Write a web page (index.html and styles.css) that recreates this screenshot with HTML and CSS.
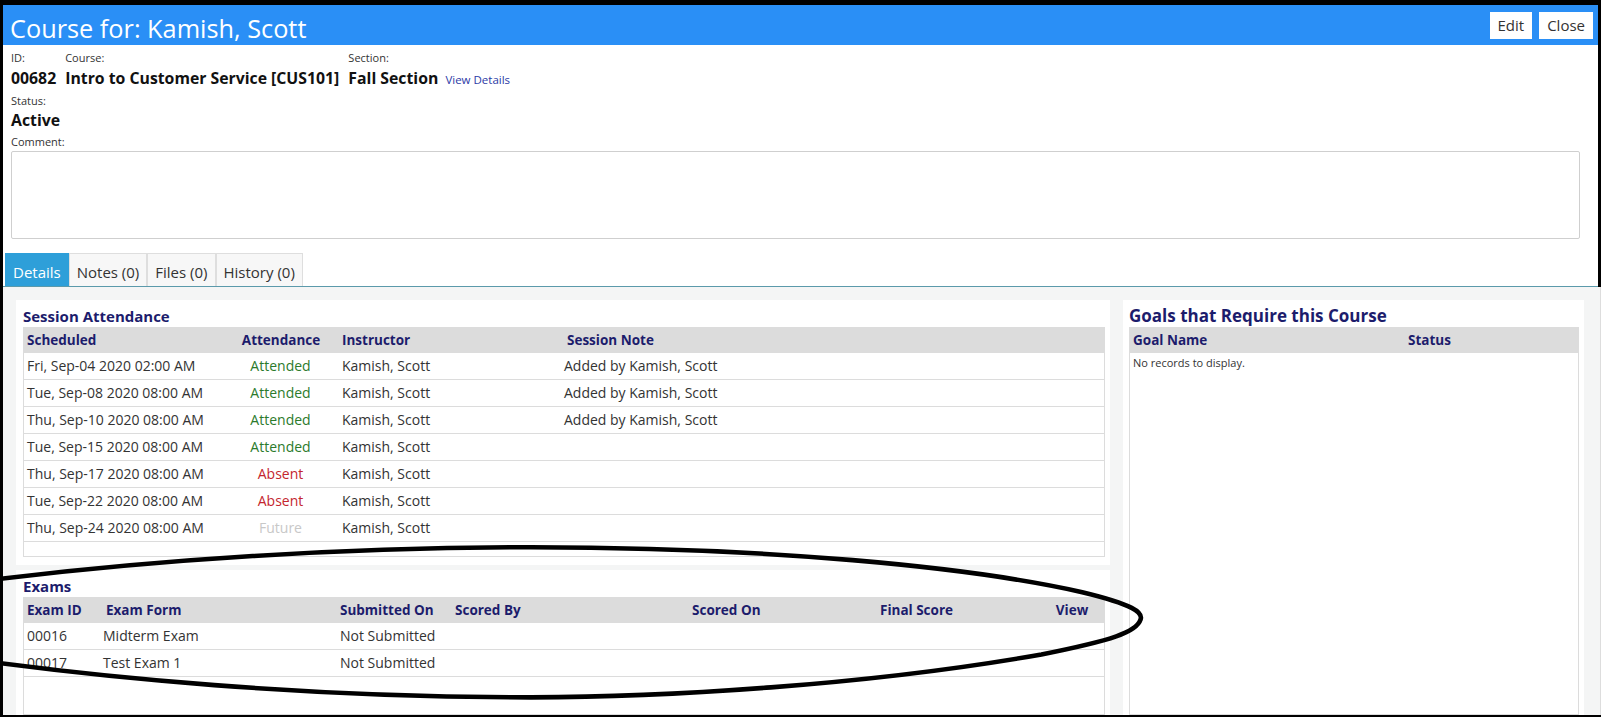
FILE: index.html
```html
<!DOCTYPE html>
<html lang="en">
<head>
    <meta charset="UTF-8">
    <meta name="viewport" content="width=device-width, initial-scale=1.0">
    <title>Course for: Kamish, Scott</title>
    <link rel="stylesheet" href="styles.css">
</head>
<body>
    <div class="window">
        <div class="top">
            <div class="titlebar">
                <h1>Course for: Kamish, Scott</h1>
                <div class="actions">
                    <button class="btn">Edit</button>
                    <button class="btn">Close</button>
                </div>
            </div>

            <div class="info">
                <div class="fields">
                    <div class="field">
                        <div class="label">ID:</div>
                        <div class="value">00682</div>
                    </div>
                    <div class="field">
                        <div class="label">Course:</div>
                        <div class="value">Intro to Customer Service [CUS101]</div>
                    </div>
                    <div class="field">
                        <div class="label">Section:</div>
                        <div class="value">Fall Section <a href="#" class="link">View Details</a></div>
                    </div>
                </div>
                <div class="field status">
                    <div class="label">Status:</div>
                    <div class="value">Active</div>
                </div>
                <div class="field comment">
                    <div class="label">Comment:</div>
                    <div class="comment-box"></div>
                </div>
            </div>

            <div class="tabs">
                <div class="tab active">Details</div>
                <div class="tab">Notes (0)</div>
                <div class="tab">Files (0)</div>
                <div class="tab">History (0)</div>
            </div>
        </div>

        <div class="content">
            <div class="left">
                <div class="panel">
                    <div class="panel-title">Session Attendance</div>
                    <div class="grid">
                        <table>
                            <colgroup>
                                <col class="c-sched">
                                <col class="c-att">
                                <col class="c-inst">
                                <col>
                            </colgroup>
                            <thead>
                                <tr>
                                    <th>Scheduled</th>
                                    <th class="center">Attendance</th>
                                    <th>Instructor</th>
                                    <th class="shift">Session Note</th>
                                </tr>
                            </thead>
                            <tbody>
                                <tr>
                                    <td>Fri, Sep-04 2020 02:00 AM</td>
                                    <td class="center attended">Attended</td>
                                    <td>Kamish, Scott</td>
                                    <td>Added by Kamish, Scott</td>
                                </tr>
                                <tr>
                                    <td>Tue, Sep-08 2020 08:00 AM</td>
                                    <td class="center attended">Attended</td>
                                    <td>Kamish, Scott</td>
                                    <td>Added by Kamish, Scott</td>
                                </tr>
                                <tr>
                                    <td>Thu, Sep-10 2020 08:00 AM</td>
                                    <td class="center attended">Attended</td>
                                    <td>Kamish, Scott</td>
                                    <td>Added by Kamish, Scott</td>
                                </tr>
                                <tr>
                                    <td>Tue, Sep-15 2020 08:00 AM</td>
                                    <td class="center attended">Attended</td>
                                    <td>Kamish, Scott</td>
                                    <td></td>
                                </tr>
                                <tr>
                                    <td>Thu, Sep-17 2020 08:00 AM</td>
                                    <td class="center absent">Absent</td>
                                    <td>Kamish, Scott</td>
                                    <td></td>
                                </tr>
                                <tr>
                                    <td>Tue, Sep-22 2020 08:00 AM</td>
                                    <td class="center absent">Absent</td>
                                    <td>Kamish, Scott</td>
                                    <td></td>
                                </tr>
                                <tr>
                                    <td>Thu, Sep-24 2020 08:00 AM</td>
                                    <td class="center future">Future</td>
                                    <td>Kamish, Scott</td>
                                    <td></td>
                                </tr>
                            </tbody>
                        </table>
                    </div>
                </div>

                <div class="panel grow">
                    <div class="panel-title">Exams</div>
                    <div class="grid fill">
                        <table>
                            <colgroup>
                                <col class="c-eid">
                                <col class="c-form">
                                <col class="c-sub">
                                <col class="c-by">
                                <col class="c-on">
                                <col class="c-score">
                                <col>
                            </colgroup>
                            <thead>
                                <tr>
                                    <th>Exam ID</th>
                                    <th class="shift">Exam Form</th>
                                    <th>Submitted On</th>
                                    <th>Scored By</th>
                                    <th>Scored On</th>
                                    <th>Final Score</th>
                                    <th class="center">View</th>
                                </tr>
                            </thead>
                            <tbody>
                                <tr>
                                    <td>00016</td>
                                    <td>Midterm Exam</td>
                                    <td>Not Submitted</td>
                                    <td></td>
                                    <td></td>
                                    <td></td>
                                    <td></td>
                                </tr>
                                <tr>
                                    <td>00017</td>
                                    <td>Test Exam 1</td>
                                    <td>Not Submitted</td>
                                    <td></td>
                                    <td></td>
                                    <td></td>
                                    <td></td>
                                </tr>
                            </tbody>
                        </table>
                    </div>
                </div>
            </div>

            <div class="panel side">
                <div class="panel-title">Goals that Require this Course</div>
                <div class="grid fill">
                    <table>
                        <colgroup>
                            <col class="c-goal">
                            <col>
                        </colgroup>
                        <thead>
                            <tr>
                                <th>Goal Name</th>
                                <th>Status</th>
                            </tr>
                        </thead>
                    </table>
                    <div class="empty">No records to display.</div>
                </div>
            </div>
        </div>

        <!-- hand drawn mark around the exams -->
        <svg class="annotation" viewBox="0 0 1601 717">
            <g transform="scale(1.021)">
                <path d="M -40 572 C 150 547, 350 536, 520 536 C 750 536, 950 555, 1060 580 C 1110 592, 1120 600, 1117 607 C 1113 619, 1090 627, 1020 641 C 850 671, 650 683, 520 683 C 300 683, 100 664, -40 644"
                      fill="none" stroke="#000" stroke-width="4.5" stroke-linecap="round"/>
            </g>
        </svg>
    </div>
</body>
</html>
```

FILE: styles.css
```css
html, body {
    margin: 0;
    height: 100%;
    overflow: hidden;
}
body {
    font-family: "Open Sans", "Noto Sans", Arial, sans-serif;
    color: #333;
    background: #fff;
}
.window {
    position: relative;
    height: 717px;
    box-sizing: border-box;
    border-top: 5px solid #000;
    border-left: 3px solid #000;
    border-bottom: 2px solid #000;
    display: flex;
    flex-direction: column;
    overflow: hidden;
}
.top {
    border-right: 3px solid #000;
}
.titlebar {
    height: 40px;
    background: #2a8ff6;
    display: flex;
    align-items: center;
    justify-content: space-between;
    padding: 0 5px 0 7px;
}
.titlebar h1 {
    margin: 0;
    padding-top: 5px;
    font-size: 25.3px;
    font-weight: 400;
    line-height: 32px;
    color: #fff;
}
.actions {
    display: flex;
    gap: 7px;
}
.btn {
    height: 27px;
    padding: 0 8px;
    background: #fff;
    border: none;
    font-family: inherit;
    font-size: 15px;
    color: #333;
    cursor: pointer;
}
.info {
    padding: 5px 18px 0 8px;
}
.fields {
    display: flex;
    gap: 9px;
    margin-bottom: 3px;
}
.label {
    font-size: 11px;
    line-height: 16px;
    color: #333;
}
.value {
    margin-top: 2px;
    font-size: 15.8px;
    font-weight: 700;
    line-height: 20px;
    color: #111;
}
.value .link {
    margin-left: 3px;
    font-size: 11.5px;
    font-weight: 400;
    color: #2b3aa6;
    text-decoration: none;
}
.status .value {
    margin-top: 1px;
}
.comment {
    margin-top: 4px;
}
.comment-box {
    margin-top: 1px;
    height: 88px;
    box-sizing: border-box;
    border: 1px solid #cfcfcf;
    border-radius: 2px;
    background: #fff;
}
.tabs {
    display: flex;
    margin-top: 14px;
    padding-left: 2px;
    border-bottom: 1px solid #5b9aab;
}
.tab {
    height: 33px;
    box-sizing: border-box;
    padding: 4px 7px 0;
    line-height: 29px;
    font-size: 15px;
    color: #333;
    background: #f7f7f7;
    border: 1px solid #dedede;
    border-bottom: none;
}
.tab.active {
    background: #2e9fd9;
    border-color: #2e9fd9;
    color: #fff;
}
.content {
    flex: 1;
    min-height: 0;
    display: grid;
    grid-template-columns: 1094px 1fr;
    grid-template-rows: minmax(0, 1fr);
    gap: 13px;
    padding: 13px 16px 0 13px;
    background: #f4f5f5;
    border-right: 1px solid #dddddd;
    overflow: hidden;
}
.left {
    display: flex;
    flex-direction: column;
    gap: 5px;
    min-height: 0;
}
.panel {
    background: #fff;
    padding: 5px 5px 8px 7px;
}
.panel.grow {
    flex: 1;
    padding-bottom: 0;
    display: flex;
    flex-direction: column;
}
.panel.side {
    padding: 5px 5px 0 6px;
    display: flex;
    flex-direction: column;
}
.panel-title {
    font-size: 15px;
    font-weight: 700;
    line-height: 22px;
    color: #1c1c6c;
}
.side .panel-title {
    font-size: 17px;
}
.grid {
    border: 1px solid #dcdcdc;
    padding-bottom: 14px;
}
.grid.fill {
    flex: 1;
    padding-bottom: 0;
}
table {
    width: 100%;
    border-collapse: collapse;
    table-layout: fixed;
}
th {
    background: #dcdcdc;
    color: #1c1c6c;
    font-size: 13.5px;
    font-weight: 700;
    text-align: left;
    line-height: 25px;
    padding: 0 4px 0 3px;
    white-space: nowrap;
}
th.shift {
    padding-left: 6px;
}
td {
    font-size: 14px;
    line-height: 26px;
    padding: 0 4px 0 3px;
    border-bottom: 1px solid #dcdcdc;
    white-space: nowrap;
    color: #333;
}
.center {
    text-align: center;
}
th.center {
    padding: 0;
}
.attended {
    color: #2c7a2c;
}
.absent {
    color: #c4262e;
}
.future {
    color: #c8c8c8;
}
.c-sched { width: 199px; }
.c-att { width: 116px; }
.c-inst { width: 222px; }
.c-eid { width: 76px; }
.c-form { width: 237px; }
.c-sub { width: 115px; }
.c-by { width: 237px; }
.c-on { width: 188px; }
.c-score { width: 163px; }
.c-goal { width: 275px; }
.empty {
    padding: 1px 3px;
    font-size: 11px;
    line-height: 18px;
    color: #333;
}
.annotation {
    position: absolute;
    left: -3px;
    top: -5px;
    width: 1601px;
    height: 717px;
    pointer-events: none;
}
```
